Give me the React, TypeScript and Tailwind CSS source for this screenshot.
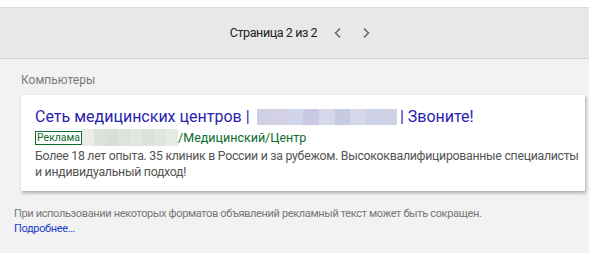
import React from "react";

const titleCells = ["#cfd0e6", "#d3d1e6", "#d1d5e9", "#c9c9e1", "#d6d8ec", "#c7cbe0", "#d6d8ea", "#cdd1e5", "#cfd2e6"];
const urlCells = ["#e9ece9", "#dbe2dc", "#d7dfd9", "#dde4de", "#e1e7e1", "#dae2dc", "#dfe6e0", "#e6ebe6"];

export default function App() {
  return (
    <div className="w-[589px] h-[253px] bg-[#f2f2f2] font-['Roboto',sans-serif] overflow-hidden">
      <div className="h-[8px] bg-white border-b border-[#dadada]" />
      <div className="h-[51px] bg-[#e8e8e8] border-b border-[#d0d0d0] flex items-center justify-center pl-[12px]">
        <span className="text-[12.5px] tracking-[-0.4px] text-[#222]">Страница 2 из 2</span>
        <svg className="ml-[16px]" width="10" height="12" viewBox="0 0 10 12">
          <path d="M7 1.5 L2.5 6 L7 10.5" fill="none" stroke="#666" strokeWidth="1.5" />
        </svg>
        <svg className="ml-[18px]" width="10" height="12" viewBox="0 0 10 12">
          <path d="M3 1.5 L7.5 6 L3 10.5" fill="none" stroke="#666" strokeWidth="1.5" />
        </svg>
      </div>
      <div className="pl-[21px] pr-[4px] pt-[13px]">
        <div className="text-[12px] text-[#7a7a7a] leading-[16px]">Компьютеры</div>
        <div className="mt-[7px] bg-white shadow-[1px_2px_3px_rgba(0,0,0,0.3)] pl-[14px] pt-[12px] pb-[11px]">
          <div className="flex items-center whitespace-nowrap text-[16px] leading-[20px] text-[#2a1fb0]">
            <span>Сеть медицинских центров |</span>
            <span className="flex h-[16px] ml-[7px]">
              {titleCells.map((c, i) => (
                <span key={i} className="w-[15.6px] h-[16px]" style={{ background: c }} />
              ))}
            </span>
            <span className="ml-[3px]">| Звоните!</span>
          </div>
          <div className="flex items-center whitespace-nowrap mt-[2px] text-[12.5px] leading-[16px] text-[#0d6b2c]">
            <span className="border border-[#0d6b2c] px-[1px] leading-[12px] text-[10.5px]">Реклама</span>
            <span className="flex h-[17px]">
              {urlCells.map((c, i) => (
                <span key={i} className="w-[12px] h-[17px]" style={{ background: c }} />
              ))}
            </span>
            <span>/Медицинский/Центр</span>
          </div>
          <div className="text-[12.3px] tracking-[-0.27px] leading-[16px] text-[#545454] mt-[2px] whitespace-nowrap">
            Более 18 лет опыта. 35 клиник в России и за рубежом. Высококвалифицированные специалисты
            <br />
            и индивидуальный подход!
          </div>
        </div>
      </div>
      <div className="pl-[14px] pt-[15px] text-[11px] tracking-[-0.35px] leading-[15px] text-[#777] whitespace-nowrap">
        <div>При использовании некоторых форматов объявлений рекламный текст может быть сокращен.</div>
        <div className="text-[#1a3fc9]">Подробнее…</div>
      </div>
    </div>
  );
}
